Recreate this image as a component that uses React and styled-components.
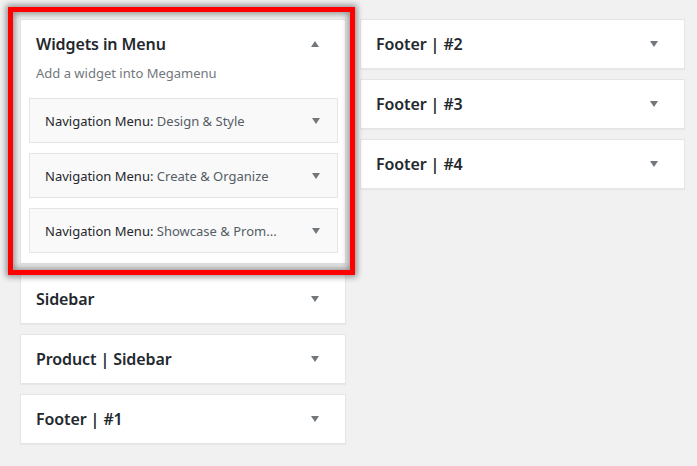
import React from "react";
import styled, { createGlobalStyle } from "styled-components";

const GlobalStyle = createGlobalStyle`
  html, body {
    margin: 0;
    padding: 0;
    background: #f1f1f1;
    font-family: "Noto Sans", "Open Sans", sans-serif;
    color: #23282d;
  }
`;

const Page = styled.div`
  display: grid;
  grid-template-columns: 326px 325px;
  column-gap: 14px;
  align-items: start;
  padding: 19px 0 0 20px;
  width: 697px;
  height: 466px;
  box-sizing: border-box;
  overflow: hidden;
`;

const Column = styled.div`
  display: flex;
  flex-direction: column;
  gap: 10px;
`;

const Card = styled.div`
  position: relative;
  background: #fff;
  border: 1px solid #e5e5e5;
  box-shadow: 0 1px 1px rgba(0, 0, 0, 0.04);
`;

const Highlight = styled.div`
  position: absolute;
  top: -13px;
  left: -13px;
  right: -10px;
  bottom: -12px;
  border: 5px solid #ff0000;
  z-index: 2;
  pointer-events: none;
  box-shadow: 0 0 6px 2px rgba(0, 0, 0, 0.4), inset 0 0 6px 2px rgba(0, 0, 0, 0.4);
`;

const Header = styled.div`
  display: flex;
  align-items: center;
  justify-content: space-between;
  height: 48px;
  padding: 0 26px 0 15px;
`;

const Title = styled.h2`
  margin: 0;
  font-size: 16px;
  font-weight: 600;
  color: #23282d;
  letter-spacing: -0.1px;
`;

const Arrow = styled.span`
  width: 0;
  height: 0;
  border-left: 4px solid transparent;
  border-right: 4px solid transparent;
  ${(p) =>
    p.$up
      ? "border-bottom: 6px solid #72777c;"
      : "border-top: 6px solid #72777c;"}
`;

const Description = styled.p`
  margin: -4px 0 16px;
  padding: 0 15px;
  line-height: 18px;
  font-size: 13px;
  color: #72777c;
`;

const WidgetList = styled.div`
  display: flex;
  flex-direction: column;
  gap: 10px;
  padding: 0 7px 10px 8px;
`;

const Widget = styled.div`
  display: flex;
  align-items: center;
  justify-content: space-between;
  height: 43px;
  padding: 0 17px 0 15px;
  background: #f9f9f9;
  border: 1px solid #e5e5e5;
`;

const WidgetTitle = styled.h3`
  margin: 0;
  font-size: 13px;
  font-weight: 400;
  color: #23282d;
  white-space: nowrap;
`;

const WidgetSub = styled.span`
  color: #555d66;
`;

const widgets = ["Design & Style", "Create & Organize", "Showcase & Prom..."];

const Sidebar = ({ name }) => (
  <Card>
    <Header>
      <Title>{name}</Title>
      <Arrow />
    </Header>
  </Card>
);

export default function App() {
  return (
    <>
      <GlobalStyle />
      <Page>
        <Column>
          <Card>
            <Highlight />
            <Header>
              <Title>Widgets in Menu</Title>
              <Arrow $up />
            </Header>
            <Description>Add a widget into Megamenu</Description>
            <WidgetList>
              {widgets.map((w) => (
                <Widget key={w}>
                  <WidgetTitle>
                    Navigation Menu: <WidgetSub>{w}</WidgetSub>
                  </WidgetTitle>
                  <Arrow />
                </Widget>
              ))}
            </WidgetList>
          </Card>
          <Sidebar name="Sidebar" />
          <Sidebar name="Product | Sidebar" />
          <Sidebar name="Footer | #1" />
        </Column>
        <Column>
          <Sidebar name="Footer | #2" />
          <Sidebar name="Footer | #3" />
          <Sidebar name="Footer | #4" />
        </Column>
      </Page>
    </>
  );
}
